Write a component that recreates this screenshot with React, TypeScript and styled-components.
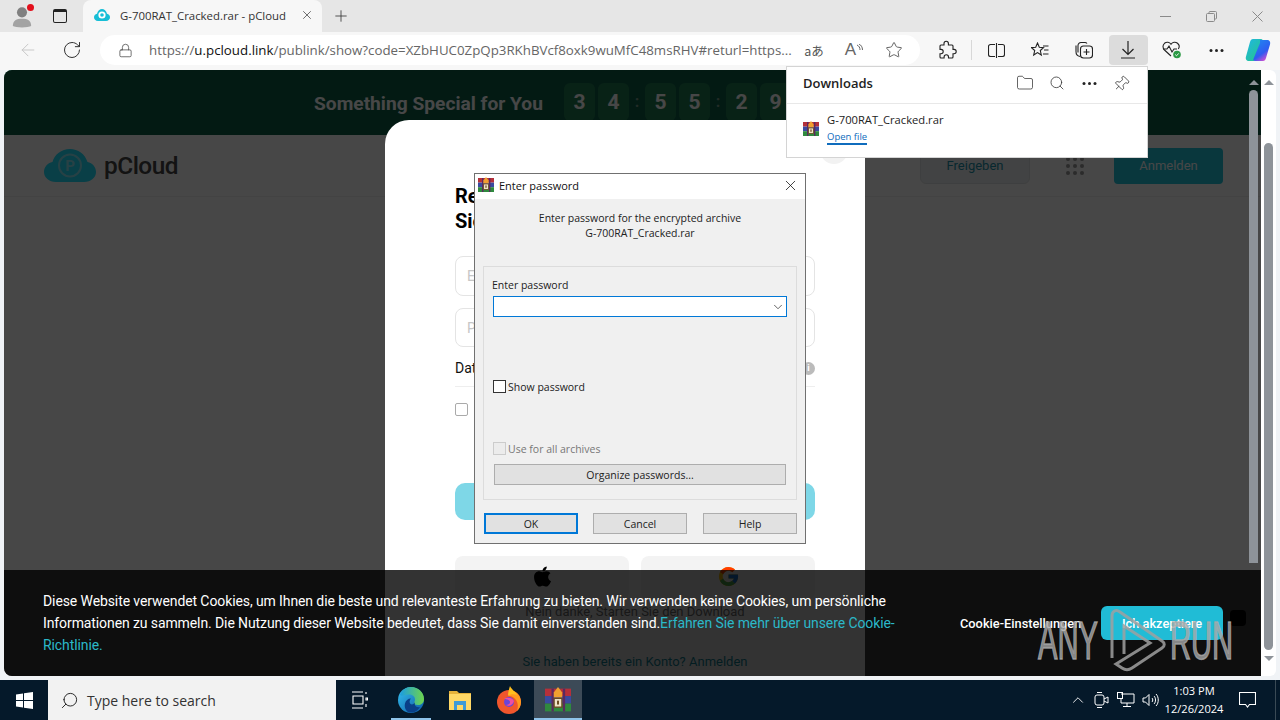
import styled, { createGlobalStyle } from 'styled-components';
import { FaApple } from 'react-icons/fa';
import { FcGoogle } from 'react-icons/fc';
import { Star, Folder, Search, Pin, Lock, RotateCw, ArrowLeft, X, Plus, ChevronDown, ChevronUp } from 'lucide-react';

const ui = `"Open Sans", "Noto Sans", sans-serif`;
const web = `Roboto, "Liberation Sans", sans-serif`;

const GlobalStyle = createGlobalStyle`
	html, body {
		margin: 0;
		padding: 0;
		overflow: hidden;
		background: #f0f3f6;
		font-family: ${ui};
	}
	* {
		box-sizing: border-box;
	}
`;

function RarIcon({ size = 16 }: { size?: number }) {
	return (
		<svg width={size} height={size} viewBox='0 0 16 16'>
			<rect x='0' y='1' width='16' height='4.6' fill='#b5303a' />
			<rect x='0' y='5.6' width='16' height='4.6' fill='#3a4aa0' />
			<rect x='0' y='10.2' width='16' height='4.8' fill='#2f8a3e' />
			<rect x='4' y='1' width='1.4' height='14' fill='#5a2a60' />
			<rect x='11' y='1' width='1.4' height='14' fill='#5a2a60' />
			<path d='M8 0l2.6 3.4v3H5.4v-3z' fill='#f0a030' />
			<rect x='5.6' y='7' width='4.8' height='5.4' fill='#efe3c8' stroke='#6a4a20' strokeWidth='.8' />
			<rect x='7.4' y='8.4' width='1.2' height='2.4' fill='#6a4a20' />
		</svg>
	);
}

function CloudLogo() {
	return (
		<svg width='52' height='34' viewBox='0 0 52 34'>
			<path d='M12 33C5 33 0 28.500 0 23c0-5 3.500-9 8.500-10C10.500 5.500 17.500 0 26 0c8 0 15 5 17.500 13C48.500 14 52 18 52 23c0 5.500-5 10-12 10z' fill='#20e0ff' />
			<circle cx='26' cy='16.500' r='11' fill='none' stroke='#8ceaf7' strokeWidth='2' />
			<text x='26' y='22' textAnchor='middle' fontFamily='Roboto, sans-serif' fontWeight='700' fontSize='15' fill='#8ceaf7'>P</text>
		</svg>
	);
}

function Favicon() {
	return (
		<svg width='16' height='12' viewBox='0 0 16 12'>
			<path d='M4 12C1.500 12 0 10.300 0 8.300 0 6.500 1.200 5 3 4.700 3.700 2 5.800 0 8 0s4.300 2 5 4.700C14.800 5 16 6.500 16 8.300 16 10.300 14.500 12 12 12z' fill='#17bed6' />
			<circle cx='8' cy='6' r='3.600' fill='#fff' />
			<circle cx='8' cy='6' r='1.800' fill='#17bed6' />
		</svg>
	);
}

function EdgeIcon() {
	return (
		<svg width='26' height='26' viewBox='0 0 26 26'>
			<defs>
				<linearGradient id='edgeA' x1='0' y1='0' x2='1' y2='1'>
					<stop offset='0' stopColor='#35c1f1' />
					<stop offset='1' stopColor='#0c59a4' />
				</linearGradient>
				<linearGradient id='edgeB' x1='0' y1='0' x2='1' y2='0'>
					<stop offset='0' stopColor='#1b9de2' />
					<stop offset='1' stopColor='#6fd44a' />
				</linearGradient>
			</defs>
			<circle cx='13' cy='13' r='13' fill='url(#edgeA)' />
			<path d='M2 8C4 3 8 0 13 0c7 0 13 5 13 12 0 4-3 6-6 6-2.500 0-4-1-4-2 0-1 1-1.500 1-3.500C17 9 14 7.500 11 7.500 7 7.500 4 10 2 8z' fill='url(#edgeB)' />
			<path d='M17 15c-1 3 1 6 5 5-2 3.500-6 6-10 5.500-4-.5-6-5-5-9 .6-3 3-5 6-5-1.500 1.500-2 4-.5 5.500 1.300 1 3.200 .5 4.500-2z' fill='#0a3f88' />
		</svg>
	);
}

function FirefoxIcon() {
	return (
		<svg width='26' height='28' viewBox='0 0 26 28'>
			<circle cx='13' cy='16' r='12' fill='#f0562c' />
			<path d='M13 4c5 0 12 4 12 12 0 4-2 7-4 9 3-8-2-15-8-15z' fill='#ff9a1f' />
			<path d='M14 0c1 3 5 5 7 9-3-1-7-1-9 1 0-4 1-7 2-10z' fill='#ffbf1f' />
			<circle cx='13' cy='16' r='5' fill='#6a45d8' />
			<path d='M8 13c3-2 8-2 10 2-1 4-5 6-8 4 2 0 4-1 4-3s-3-3-6-3z' fill='#f04fa0' />
		</svg>
	);
}

function FolderIcon() {
	return (
		<svg width='22' height='20' viewBox='0 0 22 20'>
			<path d='M0 1h8l2 2h12v3H0z' fill='#e6b23a' />
			<rect x='0' y='4' width='22' height='16' fill='#ffd866' />
			<rect x='5' y='11' width='12' height='9' fill='#3f9bd6' />
			<rect x='8' y='15' width='6' height='5' fill='#ffd866' />
		</svg>
	);
}

function CopilotIcon() {
	return (
		<svg width='26' height='26' viewBox='0 0 26 26'>
			<defs>
				<linearGradient id='copA' x1='0' y1='0' x2='1' y2='1'>
					<stop offset='0' stopColor='#1fb6e8' />
					<stop offset='1' stopColor='#27c77e' />
				</linearGradient>
				<linearGradient id='copB' x1='0' y1='0' x2='.6' y2='1'>
					<stop offset='0' stopColor='#1f8cf0' />
					<stop offset='.7' stopColor='#2f5cf0' />
					<stop offset='1' stopColor='#c84fd4' />
				</linearGradient>
			</defs>
			<path d='M8 2h8c1.500 0 2 1 1.400 2.400L11 22c-.6 1.500-1.500 2-3 2H4c-2.500 0-3.800-2-3-4.500L5 5c.5-2 1.500-3 3-3z' fill='url(#copA)' />
			<path d='M15 3h7c2.500 0 3.800 2 3 4.500L21 21c-.5 2-1.500 3-3 3h-8c-1.500 0-2-1-1.400-2.400L15 6z' fill='url(#copB)' />
		</svg>
	);
}

function Watermark() {
	return (
		<WatermarkBox>
			<WatermarkWord $w={72}>ANY</WatermarkWord>
			<svg width='56' height='64' viewBox='0 0 56 64' fill='none' stroke='#a0a0a0' strokeWidth='3' strokeOpacity='.85'>
				<path d='M2 50V8C2 3 6 1 10 4l42 29c3 2 3 5 0 7L22 60c-3 2-7 2-10 0l-6-4 34-21-26-17v28' />
			</svg>
			<WatermarkWord $w={62} $gap={4}>RUN</WatermarkWord>
		</WatermarkBox>
	);
}

export default function App() {
	return (
		<>
			<GlobalStyle />
			<Desktop>
				<Browser>
					<TabStrip>
						<Profile>
							<svg width='22' height='24' viewBox='0 0 24 26'>
								<circle cx='12' cy='9' r='5.500' fill='#808080' />
								<path d='M2 24c0-6 4-8 10-8s10 2 10 8c-3 2-17 2-20 0z' fill='#a3a3a3' />
							</svg>
							<RedDot />
						</Profile>
						<TabsButton />
						<Tab>
							<Favicon />
							<TabTitle>G-700RAT_Cracked.rar - pCloud</TabTitle>
							<X size={14} strokeWidth={1.2} color='#333' />
						</Tab>
						<NewTab>
							<Plus size={18} strokeWidth={1.1} color='#333' />
						</NewTab>
						<WindowControls>
							<WindowButton>
								<svg width='11' height='11' viewBox='0 0 11 11' stroke='#8a8a8a' fill='none'>
									<path d='M0 5.500h11' />
								</svg>
							</WindowButton>
							<WindowButton>
								<svg width='11' height='11' viewBox='0 0 11 11' stroke='#8a8a8a' fill='none'>
									<rect x='.5' y='2.500' width='8' height='8' rx='1' />
									<path d='M3 2.500V1.500a1 1 0 0 1 1-1h5.500a1 1 0 0 1 1 1V7a1 1 0 0 1-1 1h-1' />
								</svg>
							</WindowButton>
							<WindowButton>
								<svg width='11' height='11' viewBox='0 0 11 11' stroke='#8a8a8a' fill='none'>
									<path d='M.5.500l10 10M10.500.500l-10 10' />
								</svg>
							</WindowButton>
						</WindowControls>
					</TabStrip>

					<Toolbar>
						<ToolButton>
							<ArrowLeft size={20} strokeWidth={1.1} color='#c4c4c4' />
						</ToolButton>
						<ToolButton>
							<RotateCw size={20} strokeWidth={1.2} color='#333' />
						</ToolButton>
						<AddressBar>
							<Lock size={15} strokeWidth={1.2} color='#444' />
							<Url>
								https://<UrlHost>u.pcloud.link</UrlHost>/publink/show?code=XZbHUC0ZpQp3RKhBVcf8oxk9wuMfC48msRHV#returl=https...
							</Url>
							<AddressIcon>
								<TranslateGlyph>aあ</TranslateGlyph>
							</AddressIcon>
							<AddressIcon>
								<ReadGlyph>A</ReadGlyph>
								<svg width='7' height='12' viewBox='0 0 7 12' fill='none' stroke='#666' strokeWidth='1'>
									<path d='M1 1c2 1 3 2.500 3 5M3 0c2 1 3.500 3 3.500 6' />
								</svg>
							</AddressIcon>
							<AddressIcon>
								<Star size={18} strokeWidth={1.1} color='#444' />
							</AddressIcon>
						</AddressBar>
						<ToolButton $first>
							<svg width='20' height='20' viewBox='0 0 20 20' fill='none' stroke='#222' strokeWidth='1.1'>
								<path d='M7 3.500a2.200 2.200 0 0 1 4.400 0V5H15a1 1 0 0 1 1 1v3.400h1a2.200 2.200 0 0 1 0 4.400h-1V17a1 1 0 0 1-1 1h-3.500v-1a2.200 2.200 0 0 0-4.400 0v1H4a1 1 0 0 1-1-1v-3.200h1a2.200 2.200 0 0 0 0-4.400H3V6a1 1 0 0 1 1-1h3z' />
							</svg>
						</ToolButton>
						<ToolSeparator />
						<ToolButton>
							<svg width='17' height='15' viewBox='0 0 17 15' fill='none' stroke='#222' strokeWidth='1.1'>
								<path d='M7 1.500H2.500a2 2 0 0 0-2 2v8a2 2 0 0 0 2 2H7M10 1.500h4.500a2 2 0 0 1 2 2v8a2 2 0 0 1-2 2H10M8.500 0v15' />
							</svg>
						</ToolButton>
						<ToolButton>
							<svg width='18' height='17' viewBox='0 0 18 17' fill='none' stroke='#222' strokeWidth='1.1'>
								<path d='M6.500 1l1.800 4.200 4.200.4-3.200 2.900 1 4.500-3.800-2.400L2.700 13l1-4.500L.5 5.600l4.200-.4zM12 4h5.500M13 8h4.500M12 12h5.500' />
							</svg>
						</ToolButton>
						<ToolButton>
							<svg width='18' height='18' viewBox='0 0 18 18' fill='none' stroke='#222' strokeWidth='1.1'>
								<path d='M3 11.500V4.500a3 3 0 0 1 3-3h4a2.500 2.500 0 0 1 2 1' />
								<path d='M1 4.500v6a5 5 0 0 0 4 5' />
								<rect x='5.500' y='5' width='12' height='12' rx='3' />
								<path d='M11.500 8v6M8.500 11h6' />
							</svg>
						</ToolButton>
						<ToolButton>
							<ActiveBox>
								<svg width='16' height='18' viewBox='0 0 16 18' fill='none' stroke='#222' strokeWidth='1.2'>
									<path d='M8 0v13M2.500 8L8 13.500 13.500 8M1 17h14' />
								</svg>
							</ActiveBox>
						</ToolButton>
						<ToolButton>
							<svg width='20' height='18' viewBox='0 0 20 18' fill='none'>
								<path d='M9 15L2.500 9C.5 7 .5 4 2.500 2.300 4.500.7 7.500 1 9 3.200 10.500 1 13.500.7 15.500 2.300c1.800 1.500 2 4 .8 5.700' stroke='#222' strokeWidth='1.1' />
								<path d='M1 8h4l2-3 3 6 2-3h3' stroke='#222' strokeWidth='1.1' />
								<circle cx='15' cy='13.500' r='3.800' fill='#2c9a45' />
								<path d='M13.200 13.500l1.300 1.300 2.200-2.400' stroke='#fff' strokeWidth='.9' />
							</svg>
						</ToolButton>
						<ToolButton>
							<Dots />
						</ToolButton>
						<CopilotSlot>
							<CopilotIcon />
						</CopilotSlot>
					</Toolbar>

					<ContentRow>
						<Page>
							<PromoBanner>
								<PromoTitle>Something Special for You</PromoTitle>
								<Countdown>
									<DigitBox>3</DigitBox>
									<DigitBox>4</DigitBox>
									<CountColon>:</CountColon>
									<DigitBox>5</DigitBox>
									<DigitBox>5</DigitBox>
									<CountColon>:</CountColon>
									<DigitBox>2</DigitBox>
									<DigitBox>9</DigitBox>
								</Countdown>
							</PromoBanner>
							<SiteHeader>
								<LogoRow>
									<CloudLogo />
									<LogoWord>pCloud</LogoWord>
								</LogoRow>
								<HeaderActions>
									<ShareButton>Freigeben</ShareButton>
									<AppsGrid>
										{Array.from({ length: 9 }).map((_, i) => (
											<AppsDot key={i} />
										))}
									</AppsGrid>
									<LoginButton>Anmelden</LoginButton>
								</HeaderActions>
							</SiteHeader>
							<Scrim />

							<Modal>
								<ModalClose />
								<ModalTitle>
									Registrieren und
									<br />
									Sie erhalten 10 GB
								</ModalTitle>
								<Field>E-Mail</Field>
								<Field $second>Passwort</Field>
								<DataRow>
									Datenschutz
									<InfoDot>i</InfoDot>
								</DataRow>
								<ModalDivider />
								<ModalCheck />
								<SubmitButton />
								<SocialRow>
									<SocialButton>
										<FaApple size={23} color='#000' />
									</SocialButton>
									<SocialButton>
										<FcGoogle size={23} />
									</SocialButton>
								</SocialRow>
								<SkipLine>Nein danke, Starten Sie den Download</SkipLine>
								<LoginLine>Sie haben bereits ein Konto? Anmelden</LoginLine>
							</Modal>

							<PageScrollbar>
								<ChevronGlyph />
								<PageThumb />
							</PageScrollbar>
							<HiddenWidget />

							<CookieBar>
								<CookieText>
									Diese Website verwendet Cookies, um Ihnen die beste und relevanteste Erfahrung zu bieten. Wir verwenden keine Cookies, um persönliche Informationen zu sammeln. Die Nutzung dieser Website bedeutet, dass Sie damit einverstanden sind.
									<CookieLink>Erfahren Sie mehr über unsere Cookie-Richtlinie.</CookieLink>
								</CookieText>
								<CookieSettings>Cookie-Einstellungen</CookieSettings>
								<CookieAccept>Ich akzeptiere</CookieAccept>
							</CookieBar>
						</Page>
						<OuterScrollbar>
							<ChevronGlyph />
							<OuterThumb />
							<ChevronGlyph $down />
						</OuterScrollbar>
					</ContentRow>
				</Browser>

				<Taskbar>
					<StartButton>
						<svg width='17' height='17' viewBox='0 0 17 17' fill='#fff'>
							<path d='M0 2.400L7 1.400v6.600H0zM8 1.200L17 0v8H8zM0 9h7v6.600L0 14.600zM8 9h9v8L8 15.800z' />
						</svg>
					</StartButton>
					<SearchBox>
						<SearchFlip>
							<Search size={19} strokeWidth={1.2} color='#222' />
						</SearchFlip>
						<SearchText>Type here to search</SearchText>
					</SearchBox>
					<TaskViewButton>
						<svg width='16' height='18' viewBox='0 0 16 18' fill='none' stroke='#fff' strokeWidth='1.1'>
							<path d='M0 1h11M0 17h11M1 5h10v8H1z' />
							<path d='M14 1v2M14 7h1.500v2H14zM14 13v3' />
						</svg>
					</TaskViewButton>
					<TaskIcon $w={48} $mark='inset'>
						<EdgeIcon />
					</TaskIcon>
					<TaskIcon $w={49}>
						<FolderIcon />
					</TaskIcon>
					<TaskIcon $w={50}>
						<FirefoxIcon />
					</TaskIcon>
					<TaskIcon $w={48} $mark='full' $active>
						<RarIcon size={26} />
					</TaskIcon>
					<Tray>
						<TrayIcon>
							<ChevronUp size={18} strokeWidth={1.2} color='#fff' />
						</TrayIcon>
						<TrayIcon>
							<svg width='16' height='18' viewBox='0 0 16 18' fill='none' stroke='#fff' strokeWidth='1'>
								<rect x='1' y='4' width='9' height='10' rx='2' />
								<path d='M10 8l4-2v6l-4-2M3 1.500h5M3 16.500h5' />
							</svg>
						</TrayIcon>
						<TrayIcon>
							<svg width='18' height='16' viewBox='0 0 18 16' fill='none' stroke='#fff' strokeWidth='1'>
								<path d='M4 2h13v9H4M4 7v4M10 11v3M6 14.500h8' />
								<rect x='.5' y='.5' width='5' height='6' />
							</svg>
						</TrayIcon>
						<TrayIcon>
							<svg width='17' height='14' viewBox='0 0 17 14' fill='none' stroke='#fff' strokeWidth='1'>
								<path d='M1 5h2.500L7 1.500v11L3.500 9H1zM10 5c1 1 1 3 0 4M12 3c2 2 2 6 0 8M14 1c3 3 3 9 0 12' />
							</svg>
						</TrayIcon>
						<Clock>
							<span>1:03 PM</span>
							<span>12/26/2024</span>
						</Clock>
						<NotifyButton>
							<svg width='17' height='16' viewBox='0 0 17 16' fill='none' stroke='#fff' strokeWidth='1.1'>
								<path d='M.5.500h16v12h-6l-2 2.500-2-2.500h-6z' />
							</svg>
						</NotifyButton>
						<ShowDesktop />
					</Tray>
				</Taskbar>

				<DownloadsPopup>
					<PopupHeader>
						<PopupTitle>Downloads</PopupTitle>
						<PopupTools>
							<PopupTool>
								<Folder size={18} strokeWidth={1} color='#333' />
							</PopupTool>
							<PopupTool>
								<Search size={16} strokeWidth={1.2} color='#333' />
							</PopupTool>
							<PopupTool>
								<Dots />
							</PopupTool>
							<PopupTool $tilt>
								<Pin size={17} strokeWidth={1.1} color='#333' />
							</PopupTool>
						</PopupTools>
					</PopupHeader>
					<PopupItem>
						<RarIcon />
						<PopupFile>
							<FileName>G-700RAT_Cracked.rar</FileName>
							<OpenFile>Open file</OpenFile>
						</PopupFile>
					</PopupItem>
				</DownloadsPopup>

				<PasswordDialog>
					<DialogTitleBar>
						<RarIcon />
						<DialogTitle>Enter password</DialogTitle>
						<X size={17} strokeWidth={1.1} color='#111' />
					</DialogTitleBar>
					<DialogBody>
						<DialogIntro>
							Enter password for the encrypted archive
							<br />
							G-700RAT_Cracked.rar
						</DialogIntro>
						<GroupBox>
							<GroupLabel>Enter password</GroupLabel>
							<Combo>
								<ChevronDown size={14} strokeWidth={1.4} color='#444' />
							</Combo>
							<CheckRow $top={63}>
								<CheckBox />
								Show password
							</CheckRow>
							<CheckRow $top={49} $disabled>
								<CheckBox $disabled />
								Use for all archives
							</CheckRow>
							<OrganizeButton>Organize passwords...</OrganizeButton>
						</GroupBox>
						<DialogButtons>
							<DialogButton $primary>OK</DialogButton>
							<DialogButton>Cancel</DialogButton>
							<DialogButton>Help</DialogButton>
						</DialogButtons>
					</DialogBody>
				</PasswordDialog>

				<Watermark />
			</Desktop>
		</>
	);
}

const Desktop = styled.div`
	position: relative;
	width: 1280px;
	height: 720px;
	overflow: hidden;
	display: flex;
	flex-direction: column;
	background: #f0f3f6;
`;

const Browser = styled.div`
	flex: 1;
	min-height: 0;
	display: flex;
	flex-direction: column;
`;

const TabStrip = styled.div`
	height: 32px;
	display: flex;
	align-items: center;
	background: #e6e6e6;
`;

const Profile = styled.div`
	position: relative;
	width: 44px;
	height: 32px;
	display: flex;
	align-items: center;
	justify-content: center;
`;

const RedDot = styled.span`
	position: absolute;
	left: 27px;
	top: 4px;
	width: 7px;
	height: 7px;
	border-radius: 50%;
	background: #e3101c;
`;

const TabsButton = styled.span`
	width: 14px;
	height: 14px;
	margin: 0 1px 0 9px;
	border: 1.5px solid #222;
	border-top-width: 3px;
	border-radius: 2px;
`;

const Tab = styled.div`
	width: 239px;
	height: 32px;
	margin-left: 15px;
	padding: 0 8px 2px 11px;
	display: flex;
	align-items: center;
	background: #f7f7f7;
	border-radius: 8px 8px 0 0;
`;

const TabTitle = styled.span`
	flex: 1;
	margin-left: 10px;
	font-size: 11.4px;
	color: #333;
	white-space: nowrap;
`;

const NewTab = styled.div`
	margin-left: 10px;
	display: flex;
`;

const WindowControls = styled.div`
	margin-left: auto;
	display: flex;
`;

const WindowButton = styled.div`
	width: 46px;
	height: 32px;
	display: flex;
	align-items: center;
	justify-content: center;
`;

const Toolbar = styled.div`
	height: 38px;
	padding: 3px 0 5px 6px;
	display: flex;
	align-items: center;
	background: #f7f7f7;
`;

const ToolButton = styled.div<{ $first?: boolean }>`
	width: 44px;
	height: 30px;
	margin-left: ${(p) => (p.$first ? '5px' : '0')};
	display: flex;
	align-items: center;
	justify-content: center;
`;

const ActiveBox = styled.div`
	width: 39px;
	height: 30px;
	display: flex;
	align-items: center;
	justify-content: center;
	background: #dcdcdc;
	border-radius: 4px;
`;

const ToolSeparator = styled.div`
	width: 1px;
	height: 20px;
	margin: 0 2px;
	background: #d8d8d8;
	flex: none;
`;

const CopilotSlot = styled.div`
	width: 40px;
	display: flex;
	justify-content: center;
`;

const AddressBar = styled.div`
	width: 820px;
	height: 30px;
	margin-left: 6px;
	padding: 0 6px 0 18px;
	display: flex;
	align-items: center;
	background: #fff;
	border-radius: 15px;
`;

const Url = styled.div`
	flex: 1;
	min-width: 0;
	margin-left: 16px;
	font-size: 13.3px;
	color: #666;
	white-space: nowrap;
`;

const UrlHost = styled.span`
	color: #111;
`;

const AddressIcon = styled.div`
	width: 40px;
	display: flex;
	align-items: center;
	justify-content: center;
`;

const TranslateGlyph = styled.span`
	font-family: 'Noto Sans CJK JP', sans-serif;
	font-size: 12.5px;
	color: #555;
`;

const ReadGlyph = styled.span`
	font-family: 'Liberation Sans', sans-serif;
	font-size: 17px;
	color: #666;
`;

const Dots = styled.span`
	width: 3px;
	height: 3px;
	border-radius: 50%;
	background: #222;
	box-shadow: 5.500px 0 0 #222, -5.500px 0 0 #222;
`;

const ContentRow = styled.div`
	height: 606px;
	padding-left: 4px;
	display: flex;
`;

const Page = styled.div`
	position: relative;
	width: 1257px;
	height: 606px;
	overflow: hidden;
	border-radius: 8px 0 0 8px;
	background: #fff;
`;

const PromoBanner = styled.div`
	height: 65px;
	padding-left: 310px;
	display: flex;
	align-items: center;
	background: #0b5d47;
`;

const PromoTitle = styled.div`
	font-family: ${web};
	font-weight: 700;
	font-size: 19.2px;
	padding-top: 1px;
	color: #fff;
	white-space: nowrap;
`;

const Countdown = styled.div`
	margin: 13px 0 0 21px;
	height: 38px;
	align-self: flex-start;
	display: flex;
	gap: 3px;
`;

const DigitBox = styled.div`
	width: 31px;
	height: 38px;
	display: flex;
	align-items: center;
	justify-content: center;
	border-radius: 6px;
	background: #1f7a4f;
	font-family: ${web};
	font-weight: 700;
	font-size: 21px;
	color: #fff;
`;

const CountColon = styled.div`
	width: 10px;
	text-align: center;
	line-height: 38px;
	font-family: ${web};
	font-weight: 700;
	color: #7a9a8a;
`;

const SiteHeader = styled.div`
	height: 62px;
	padding: 0 38px 0 40px;
	display: flex;
	align-items: center;
	justify-content: space-between;
	border-bottom: 1px solid #f0f0f0;
	background: #fff;
`;

const LogoRow = styled.div`
	display: flex;
	align-items: center;
	gap: 8px;
`;

const LogoWord = styled.span`
	font-family: ${web};
	font-weight: 500;
	font-size: 24.4px;
	letter-spacing: -0.5px;
	color: #444;
`;

const HeaderActions = styled.div`
	display: flex;
	align-items: center;
`;

const ShareButton = styled.div`
	width: 110px;
	height: 36px;
	display: flex;
	align-items: center;
	justify-content: center;
	border: 1px solid #dfe2e4;
	border-radius: 6px;
	background: #eef0f2;
	font-family: ${web};
	font-size: 13px;
	color: #1a8fa8;
`;

const AppsGrid = styled.div`
	width: 18px;
	margin: 0 30px 0 36px;
	display: grid;
	grid-template-columns: repeat(3, 4px);
	gap: 3px;
`;

const AppsDot = styled.span`
	width: 4px;
	height: 4px;
	border-radius: 50%;
	background: #999;
`;

const LoginButton = styled.div`
	width: 109px;
	height: 36px;
	display: flex;
	align-items: center;
	justify-content: center;
	border-radius: 4px;
	background: #20c4dc;
	font-family: ${web};
	font-size: 13px;
	color: #fff;
`;

const Scrim = styled.div`
	position: absolute;
	inset: 0;
	background: rgba(0, 0, 0, 0.72);
`;

const Modal = styled.div`
	position: absolute;
	left: 381px;
	top: 50px;
	width: 480px;
	height: 600px;
	padding: 64px 50px 0 70px;
	background: #fff;
	border-radius: 24px 24px 0 0;
	font-family: ${web};
`;

const ModalClose = styled.div`
	position: absolute;
	left: 435px;
	top: 16px;
	width: 28px;
	height: 28px;
	border-radius: 50%;
	background: #f2f2f2;
`;

const ModalTitle = styled.div`
	font-size: 20px;
	line-height: 25px;
	font-weight: 700;
	color: #000;
`;

const Field = styled.div<{ $second?: boolean }>`
	height: ${(p) => (p.$second ? '39px' : '40px')};
	margin-top: ${(p) => (p.$second ? '12px' : '22px')};
	padding-left: 11px;
	display: flex;
	align-items: center;
	border: 1px solid #e4e4e4;
	border-radius: 8px;
	font-size: 14px;
	color: #c6c6c6;
`;

const DataRow = styled.div`
	height: 18px;
	margin-top: 12px;
	display: flex;
	align-items: center;
	justify-content: space-between;
	font-size: 14px;
	color: #111;
`;

const InfoDot = styled.span`
	width: 13px;
	height: 13px;
	display: flex;
	align-items: center;
	justify-content: center;
	border-radius: 50%;
	background: #bbb;
	font-size: 9px;
	font-weight: 700;
	color: #fff;
`;

const ModalDivider = styled.div`
	height: 1px;
	margin-top: 9px;
	background: #eee;
`;

const ModalCheck = styled.div`
	width: 13px;
	height: 13px;
	margin-top: 16px;
	border: 1px solid #aaa;
	border-radius: 2px;
`;

const SubmitButton = styled.div`
	height: 37px;
	margin-top: 67px;
	border-radius: 10px;
	background: #7ed7e7;
`;

const SocialRow = styled.div`
	margin-top: 36px;
	display: flex;
	gap: 12px;
`;

const SocialButton = styled.div`
	flex: 1;
	height: 44px;
	display: flex;
	align-items: flex-start;
	justify-content: center;
	padding-top: 9px;
	border-radius: 8px;
	background: #f3f3f3;
`;

const SkipLine = styled.div`
	margin-top: 3px;
	text-align: center;
	font-size: 13px;
	line-height: 18px;
	color: #777;
`;

const LoginLine = styled.div`
	margin-top: 32px;
	text-align: center;
	font-size: 13px;
	line-height: 18px;
	color: #128fa5;
`;

const PageScrollbar = styled.div`
	position: absolute;
	right: 3px;
	top: 0;
	width: 9px;
	display: flex;
	flex-direction: column;
	align-items: center;
`;

const PageThumb = styled.div`
	width: 9px;
	height: 473px;
	margin-top: 5px;
	border-radius: 5px 5px 0 0;
	background: #8e9399;
`;

const ChevronGlyph = styled.span<{ $down?: boolean }>`
	width: 0;
	height: 0;
	margin-top: ${(p) => (p.$down ? '6px' : '10px')};
	border-left: 5px solid transparent;
	border-right: 5px solid transparent;
	${(p) => (p.$down ? 'border-top: 5px solid #8e9399;' : 'border-bottom: 5px solid #8e9399;')}
`;

const HiddenWidget = styled.div`
	position: absolute;
	left: 1226px;
	top: 540px;
	width: 16px;
	height: 16px;
	border-radius: 4px;
	background: #000;
`;

const CookieBar = styled.div`
	position: absolute;
	left: 0;
	right: 0;
	bottom: 0;
	height: 106px;
	padding-left: 39px;
	display: flex;
	align-items: center;
	background: rgba(0, 0, 0, 0.8);
	font-family: ${web};
`;

const CookieText = styled.div`
	width: 862px;
	font-size: 14px;
	letter-spacing: -0.1px;
	line-height: 22px;
	color: #fff;
`;

const CookieLink = styled.span`
	color: #2bb8c9;
`;

const CookieSettings = styled.div`
	width: 121px;
	margin-left: 55px;
	font-size: 12.8px;
	font-weight: 500;
	white-space: nowrap;
	color: #fff;
`;

const CookieAccept = styled.div`
	width: 122px;
	height: 34px;
	margin-left: 20px;
	display: flex;
	align-items: center;
	justify-content: center;
	border-radius: 6px;
	background: #20bcd6;
	font-size: 12.8px;
	font-weight: 500;
	color: #fff;
`;

const OuterScrollbar = styled.div`
	width: 15px;
	height: 606px;
	display: flex;
	flex-direction: column;
	align-items: center;
	background: #fff;
	border-radius: 0 6px 6px 0;
`;

const OuterThumb = styled.div`
	width: 9px;
	height: 507px;
	margin-top: 58px;
	border-radius: 5px;
	background: #8e9399;
`;

const Taskbar = styled.div`
	height: 40px;
	display: flex;
	background: #05192a;
`;

const StartButton = styled.div`
	width: 48px;
	display: flex;
	align-items: center;
	justify-content: center;
`;

const SearchBox = styled.div`
	width: 288px;
	padding-left: 12px;
	display: flex;
	align-items: center;
	background: #f2f2f2;
`;

const SearchFlip = styled.div`
	display: flex;
	transform: scaleX(-1);
`;

const SearchText = styled.span`
	margin-left: 8px;
	font-size: 14px;
	color: #333;
`;

const TaskViewButton = styled.div`
	width: 48px;
	margin-right: 3px;
	display: flex;
	align-items: center;
	justify-content: center;
`;

const TaskIcon = styled.div<{ $w: number; $mark?: 'inset' | 'full'; $active?: boolean }>`
	position: relative;
	width: ${(p) => p.$w}px;
	display: flex;
	align-items: center;
	justify-content: center;
	background: ${(p) => (p.$active ? '#3c4a57' : 'transparent')};
	${(p) =>
		p.$mark &&
		`&::after {
			content: '';
			position: absolute;
			bottom: 0;
			left: ${p.$mark === 'inset' ? '4px' : '0'};
			right: ${p.$mark === 'inset' ? '4px' : '0'};
			height: 2px;
			background: #8fc3ea;
		}`}
`;

const Tray = styled.div`
	margin-left: auto;
	display: flex;
	align-items: center;
`;

const TrayIcon = styled.div`
	width: 24px;
	display: flex;
	justify-content: center;
`;

const Clock = styled.div`
	width: 64px;
	display: flex;
	flex-direction: column;
	align-items: center;
	font-size: 11.1px;
	line-height: 18px;
	color: #fff;
`;

const NotifyButton = styled.div`
	width: 42px;
	display: flex;
	justify-content: center;
`;

const ShowDesktop = styled.div`
	width: 12px;
	height: 40px;
	background: linear-gradient(to right, transparent 7px, #3a4a55 7px, #3a4a55 8px, transparent 8px);
`;

const DownloadsPopup = styled.div`
	position: absolute;
	left: 786px;
	top: 66px;
	width: 362px;
	height: 92px;
	background: #fff;
	border: 1px solid #d4d4d4;
`;

const PopupHeader = styled.div`
	height: 37px;
	padding: 0 10px 4px 16px;
	display: flex;
	align-items: center;
	justify-content: space-between;
	border-bottom: 1px solid #e8e8e8;
`;

const PopupTitle = styled.div`
	font-size: 13px;
	font-weight: 600;
	color: #222;
`;

const PopupTools = styled.div`
	display: flex;
	align-items: center;
`;

const PopupTool = styled.div<{ $tilt?: boolean }>`
	width: 32px;
	display: flex;
	align-items: center;
	justify-content: center;
	transform: ${(p) => (p.$tilt ? 'rotate(45deg)' : 'none')};
`;

const PopupItem = styled.div`
	padding: 8px 16px 0;
	display: flex;
	align-items: center;
	gap: 8px;
`;

const PopupFile = styled.div`
	display: flex;
	flex-direction: column;
	align-items: flex-start;
`;

const FileName = styled.div`
	font-size: 11.2px;
	line-height: 15px;
	color: #222;
`;

const OpenFile = styled.div`
	margin-top: 3px;
	font-size: 9.5px;
	line-height: 13px;
	color: #0f6cbd;
	border-bottom: 2px solid #0f6cbd;
`;

const PasswordDialog = styled.div`
	position: absolute;
	left: 474px;
	top: 173px;
	width: 332px;
	height: 371px;
	display: flex;
	flex-direction: column;
	background: #f0f0f0;
	border: 1px solid #707070;
`;

const DialogTitleBar = styled.div`
	height: 25px;
	padding: 0 6px 3px 3px;
	display: flex;
	align-items: center;
	background: #fff;
`;

const DialogTitle = styled.div`
	flex: 1;
	margin-left: 5px;
	font-size: 11px;
	color: #111;
`;

const DialogBody = styled.div`
	flex: 1;
	padding: 12px 8px 0;
	display: flex;
	flex-direction: column;
	font-size: 10.5px;
	color: #222;
`;

const DialogIntro = styled.div`
	height: 30px;
	line-height: 15px;
	text-align: center;
	margin-bottom: 25px;
`;

const GroupBox = styled.div`
	height: 234px;
	padding: 11px 10px 0 8px;
	display: flex;
	flex-direction: column;
	border: 1px solid #dcdcdc;
`;

const GroupLabel = styled.div`
	line-height: 15px;
`;

const Combo = styled.div`
	width: 294px;
	height: 21px;
	margin: 3px 0 0 1px;
	padding-right: 1px;
	display: flex;
	align-items: center;
	justify-content: flex-end;
	background: #fff;
	border: 1px solid #0078d7;
`;

const CheckRow = styled.div<{ $top: number; $disabled?: boolean }>`
	height: 13px;
	margin-top: ${(p) => p.$top}px;
	margin-left: 1px;
	display: flex;
	align-items: center;
	gap: 2px;
	color: ${(p) => (p.$disabled ? '#777' : '#222')};
`;

const CheckBox = styled.span<{ $disabled?: boolean }>`
	width: 13px;
	height: 13px;
	background: ${(p) => (p.$disabled ? '#ececec' : '#fff')};
	border: 1px solid ${(p) => (p.$disabled ? '#ccc' : '#333')};
`;

const OrganizeButton = styled.div`
	width: 292px;
	height: 21px;
	margin: 9px 0 0 2px;
	display: flex;
	align-items: center;
	justify-content: center;
	background: #e1e1e1;
	border: 1px solid #adadad;
`;

const DialogButtons = styled.div`
	margin: 13px 0 0 1px;
	display: flex;
	gap: 15px;

	& > :last-child {
		margin-left: 1px;
	}
`;

const DialogButton = styled.div<{ $primary?: boolean }>`
	width: 94px;
	height: 21px;
	display: flex;
	align-items: center;
	justify-content: center;
	background: #e1e1e1;
	border: ${(p) => (p.$primary ? '2px solid #0078d7' : '1px solid #adadad')};
`;

const WatermarkBox = styled.div`
	position: absolute;
	left: 1038px;
	top: 608px;
	display: flex;
	align-items: center;
	pointer-events: none;
`;

const WatermarkWord = styled.span<{ $w: number; $gap?: number }>`
	width: ${(p) => p.$w}px;
	margin-left: ${(p) => p.$gap ?? 0}px;
	display: block;
	font-family: 'Liberation Sans', sans-serif;
	font-size: 54px;
	line-height: 62px;
	color: rgba(170, 170, 170, 0.8);
	-webkit-text-stroke: 1.5px rgba(170, 170, 170, 0.8);
	transform: scaleX(0.54);
	transform-origin: left center;
`;
